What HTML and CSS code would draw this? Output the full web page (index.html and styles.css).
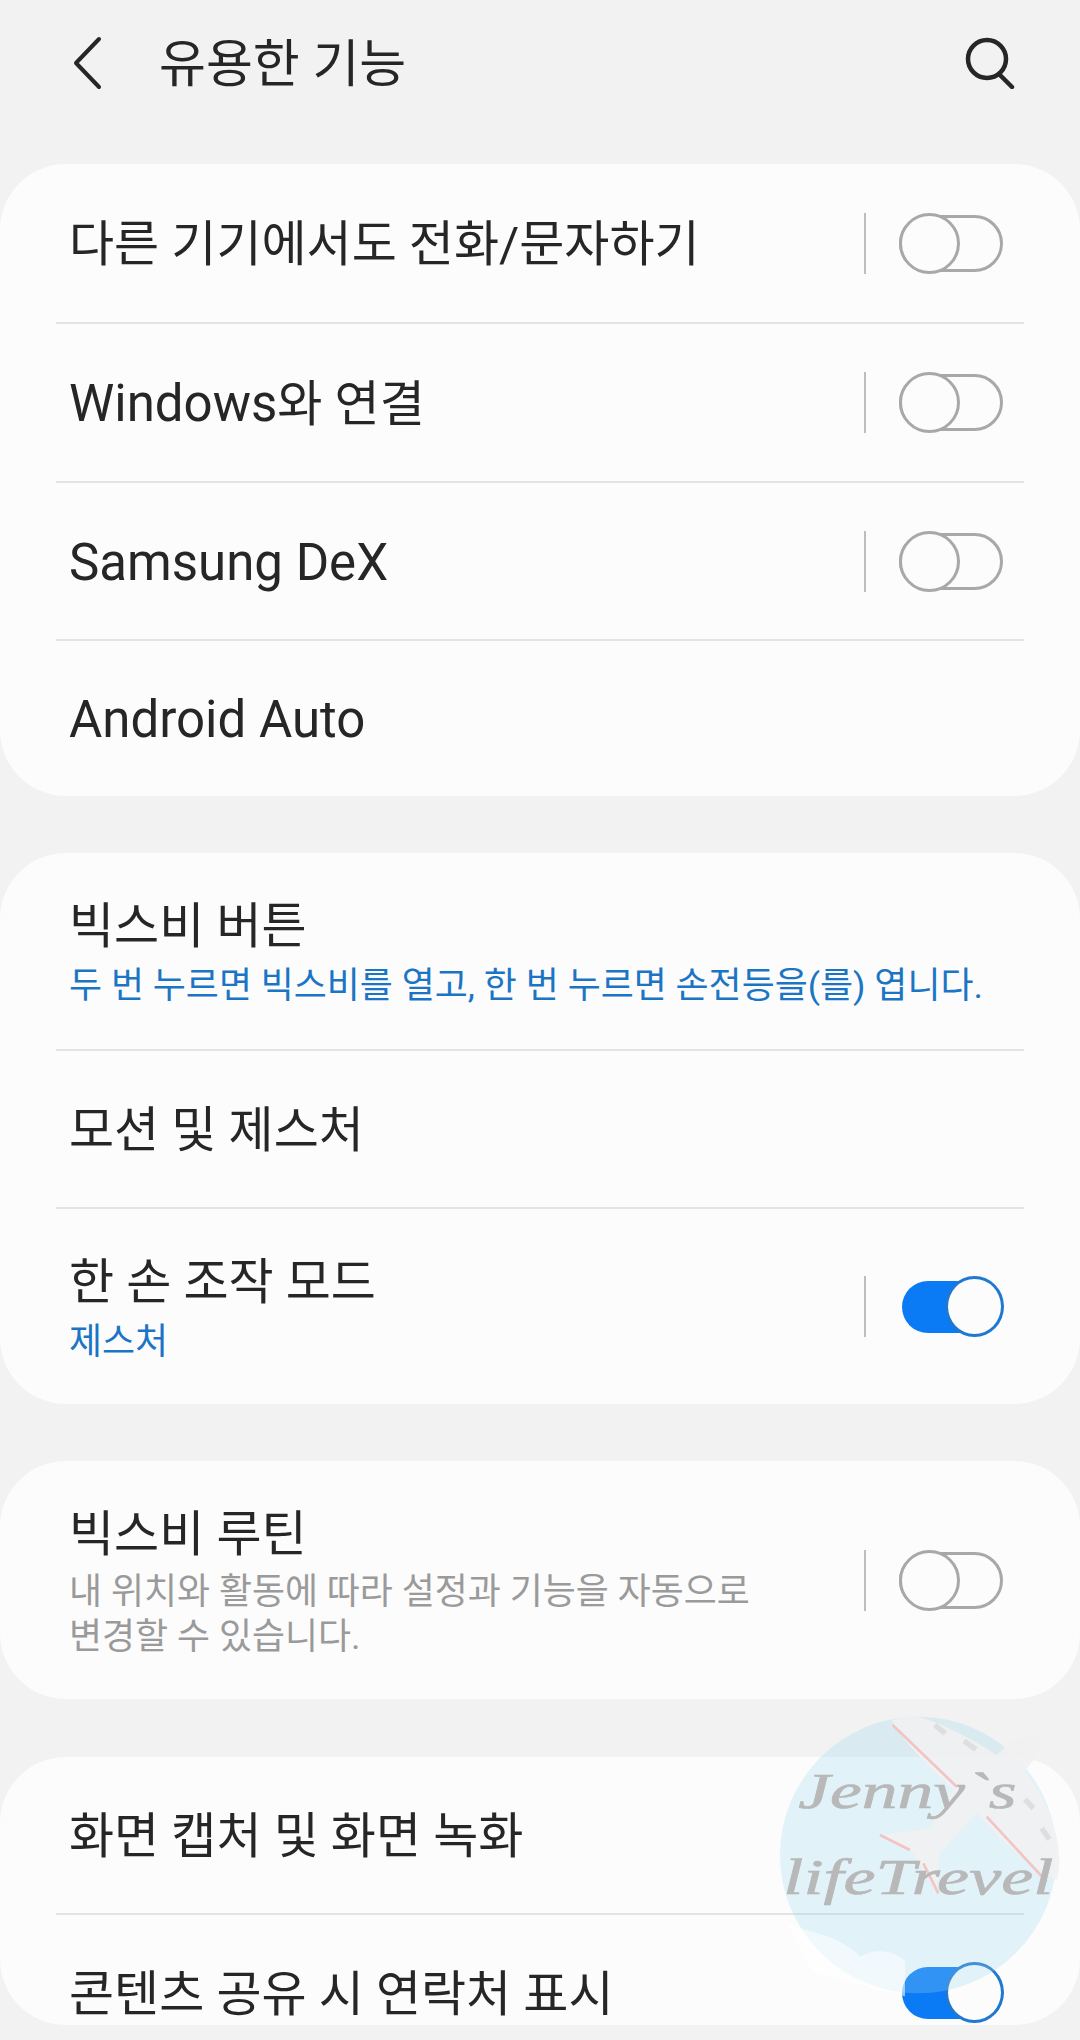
FILE: index.html
```html
<!DOCTYPE html>
<html lang="ko">
<head>
<meta charset="utf-8">
<title>유용한 기능</title>
<link rel="stylesheet" href="styles.css">
</head>
<body>
<div class="screen">
  <header class="top">
    <svg class="back" viewBox="0 0 30 54" width="30" height="54"><path d="M27 3 L4 27 L27 51" fill="none" stroke="#262626" stroke-width="4" stroke-linecap="round" stroke-linejoin="round"/></svg>
    <h1 class="heading">유용한 기능</h1>
    <svg class="search" viewBox="0 0 52 52" width="52" height="52"><circle cx="23" cy="22" r="19" fill="none" stroke="#262626" stroke-width="4.5"/><path d="M35 37 L48 50" fill="none" stroke="#262626" stroke-width="4.5" stroke-linecap="round"/></svg>
  </header>

  <section class="card">
    <div class="row first"><div class="text"><div class="title">다른 기기에서도 전화/문자하기</div></div><span class="sep"></span><span class="toggle"><span class="thumb"></span></span></div>
    <div class="row second"><div class="text"><div class="title"><span class="lat">Windows</span>와 연결</div></div><span class="sep"></span><span class="toggle"><span class="thumb"></span></span></div>
    <div class="row"><div class="text"><div class="title lat">Samsung DeX</div></div><span class="sep"></span><span class="toggle"><span class="thumb"></span></span></div>
    <div class="row short"><div class="text"><div class="title lat">Android Auto</div></div></div>
  </section>

  <section class="card">
    <div class="row tall"><div class="text"><div class="title">빅스비 버튼</div><div class="sub blue">두 번 누르면 빅스비를 열고, 한 번 누르면 손전등을(를) 엽니다.</div></div></div>
    <div class="row"><div class="text"><div class="title">모션 및 제스처</div></div></div>
    <div class="row tall-last"><div class="text"><div class="title">한 손 조작 모드</div><div class="sub blue">제스처</div></div><span class="sep"></span><span class="toggle on"><span class="thumb"></span></span></div>
  </section>

  <section class="card">
    <div class="row routine"><div class="text"><div class="title">빅스비 루틴</div><div class="sub gray">내 위치와 활동에 따라 설정과 기능을 자동으로<br>변경할 수 있습니다.</div></div><span class="sep"></span><span class="toggle"><span class="thumb"></span></span></div>
  </section>

  <section class="card last">
    <div class="row"><div class="text"><div class="title">화면 캡처 및 화면 녹화</div></div></div>
    <div class="row cut"><div class="text"><div class="title">콘텐츠 공유 시 연락처 표시</div></div><span class="toggle on"><span class="thumb"></span></span></div>
  </section>

  <svg class="mark" viewBox="0 0 900 1200" width="300" height="400">
    <defs><clipPath id="cloudclip"><rect x="0" y="800" width="375" height="300"/></clipPath></defs>
    <circle cx="415" cy="645" r="415" fill="#9ad6f0" fill-opacity=".27"/>
    <path d="M20 850 C90 880 170 880 240 950 C300 920 350 930 420 1000 L420 1080 L100 1000Z" fill="#fff" fill-opacity=".55" clip-path="url(#cloudclip)"/>
    <path d="M335 240 L400 228 C450 235 560 285 650 345 L700 300 L785 280 L775 340 L735 395 C800 470 860 620 830 720 C730 680 640 570 590 520 L480 640 L470 760 L400 640 L300 585 L450 565 L520 450 C450 380 370 310 335 240Z" fill="#f1f1f1" fill-opacity=".9"/>
    <path d="M338 255 L530 440 M620 530 L800 725 M300 585 L390 630 M430 670 L475 760" fill="none" stroke="#f3c4c4" stroke-width="8"/>
    <path d="M464 255 L496 280 M552 303 L588 328 M735 478 L760 505 M785 565 L808 598" fill="none" stroke="#dedede" stroke-width="16"/>
    <text class="mark-text" x="55" y="505" textLength="655" lengthAdjust="spacingAndGlyphs">Jenny`s</text>
    <text class="mark-text" x="10" y="762" textLength="810" lengthAdjust="spacingAndGlyphs">lifeTrevel</text>
  </svg>
</div>
</body>
</html>
```
FILE: styles.css
```css
* { box-sizing: border-box; }
html, body { margin: 0; padding: 0; }
body { background: #f2f2f2; font-family: Roboto, "Noto Sans CJK KR", sans-serif; }
.screen { position: relative; width: 1080px; height: 2040px; overflow: hidden; background: #f2f2f2; display: flex; flex-direction: column; gap: 57px; }
.top { height: 107px; display: flex; align-items: center; padding: 18px 64px 0 72px; }
.back { flex: none; }
.heading { margin: 4px 0 0 57px; flex: 1; font-size: 51px; font-weight: 400; color: #262626; line-height: 1; }
.search { flex: none; }
.card { background: #fcfcfc; border-radius: 66px; padding: 0 56px; flex: none; }
.card.last { margin-top: 1px; }
.row { display: flex; align-items: center; height: 158px; padding: 0 21px 0 13px; border-bottom: 2px solid #e3e3e3; }
.row:last-child { border-bottom: 0; }
.row.first { height: 160px; }
.row.second { height: 159px; }
.row.short { height: 155px; }
.row.tall { height: 198px; }
.row.tall-last { height: 195px; }
.row.routine { height: 238px; }
.row.cut { height: 110px; padding-top: 46px; }
.text { flex: 1; min-width: 0; padding-top: 3px; }
.title { font-size: 49px; line-height: 62px; color: #262626; white-space: nowrap; }
.lat { font-size: 51px; }
.sub { font-size: 35.9px; line-height: 45px; white-space: nowrap; }
.blue { color: #1b75c4; margin-top: 6px; }
.gray { color: #9a9a9a; margin-top: 4px; }
.sep { flex: none; width: 2px; height: 61px; background: #bdbdbd; margin-right: 33px; }
.toggle { flex: none; position: relative; width: 104px; height: 57px; border: 3px solid #a8a8a8; border-radius: 29px; }
.thumb { position: absolute; left: -3px; top: -5px; width: 61px; height: 61px; border: 3px solid #a8a8a8; border-radius: 50%; background: #fcfcfc; }
.toggle.on { width: 101px; height: 52px; background: #0a7bf5; border: 0; border-radius: 26px; margin-left: 3px; }
.toggle.on .thumb { left: 43px; top: -5px; width: 59px; height: 61px; border-color: #1f78d1; }
.mark { position: absolute; left: 780px; top: 1640px; pointer-events: none; }
.mark-text { font-family: "Liberation Serif", serif; font-style: italic; font-size: 150px; fill: #b8b8b8; stroke: #b8b8b8; stroke-width: 2px; }
```
